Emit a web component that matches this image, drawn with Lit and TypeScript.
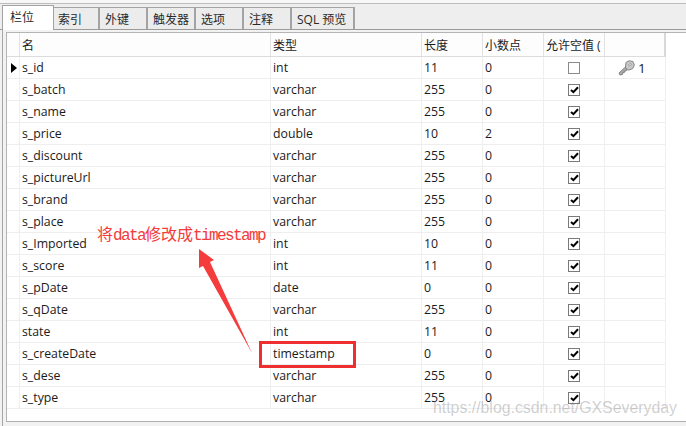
import { LitElement, html, css, svg } from "lit";
import { customElement } from "lit/decorators.js";

type Row = [string, string, string, string, boolean];
const rows: Row[] = [
  ["s_id", "int", "11", "0", false],
  ["s_batch", "varchar", "255", "0", true],
  ["s_name", "varchar", "255", "0", true],
  ["s_price", "double", "10", "2", true],
  ["s_discount", "varchar", "255", "0", true],
  ["s_pictureUrl", "varchar", "255", "0", true],
  ["s_brand", "varchar", "255", "0", true],
  ["s_place", "varchar", "255", "0", true],
  ["s_Imported", "int", "10", "0", true],
  ["s_score", "int", "11", "0", true],
  ["s_pDate", "date", "0", "0", true],
  ["s_qDate", "varchar", "255", "0", true],
  ["state", "int", "11", "0", true],
  ["s_createDate", "timestamp", "0", "0", true],
  ["s_dese", "varchar", "255", "0", true],
  ["s_type", "varchar", "255", "0", true],
];
const tabs = ["索引", "外键", "触发器", "选项", "注释", "SQL 预览"];

const key = svg`<svg class="key" width="17" height="16" viewBox="0 0 17 16">
  <path d="M1 13 L2 15 L4.5 14.5 L5 12.5 L6.5 12.3 L7.3 10.5 L9 9.7" fill="#b5b5b5" stroke="#7d7d7d" stroke-width="1" stroke-linejoin="round"/>
  <path d="M1 13 L7.5 7 L9 9.7 L4 13.5" fill="#a8a8a8" stroke="#858585" stroke-width="1" stroke-linejoin="round"/>
  <path d="M7.5 7 L8 2.5 L11 0.8 L15 1.5 L16.3 5 L14.8 8.5 L11 10 L9 9.7 Z" fill="#c9c9c9" stroke="#858585" stroke-width="1" stroke-linejoin="round"/>
  <path d="M10.5 4.5 L13 3.5 L13.5 5 L11.2 6 Z" fill="#f4f4f4" stroke="#8f8f8f" stroke-width="0.7"/>
</svg>`;

@customElement("app-root")
export class AppRoot extends LitElement {
  static styles = css`
    :host { display: block; width: 686px; height: 426px; overflow: hidden; position: relative; background: #f2f2f2;
      font-family: "Open Sans", "Noto Sans CJK SC", sans-serif; font-size: 12.3px; color: #1a1a1a; }
    .top { height: 3px; background: #f7f7f7; border-bottom: 1px solid #bdbdbd; }
    .tabbar { height: 25px; background: #eeeeee; border-bottom: 1px solid #9b9b9b; display: flex; align-items: flex-end; padding-left: 2px; }
    .tab { box-sizing: border-box; height: 22px; background: #ececec; border-top: 1px solid #a3a3a3; border-right: 2px solid #a3a3a3; width: 48px;
      display: flex; align-items: center; padding-left: 5px; font-size: 12px; color: #2a2a2a; }
    .tab.first { width: 46px; padding-left: 4px; }
    .tab.sql { width: 63px; }
    .tab.active { width: 52px; height: 25px; background: #fff; border: 1px solid #a3a3a3; border-bottom: 0; margin-bottom: -1px; padding-left: 7px; padding-bottom: 3px; position: relative; }
    .panel { height: 396px; box-sizing: border-box; margin-left: 2px; border-left: 1px solid #a6a6a6; padding: 2px 0 0 3px; background: #f2f2f2; }
    .inner { height: 390px; box-sizing: border-box; background: #fff; border-left: 1px solid #b4b4b4; border-top: 1px solid #b4b4b4; border-bottom: 1px solid #b0b0b0; }
    .grid { width: 659px; }
    .r { display: grid; grid-template-columns: 13px 251px 151px 61px 61px 61px 61px; height: 22px; box-sizing: border-box; border-bottom: 1px solid #eeeeee; }
    .r.head { height: 24px; background: #fdfdfd; border-bottom: 1px solid #dcdcdc; font-size: 12px; }
    .c { box-sizing: border-box; border-right: 1px solid #efefef; padding-left: 2px; display: flex; align-items: center; white-space: nowrap; overflow: hidden; }
    .head .c { border-right-color: #e2e2e2; }
    .c.mark { padding-left: 4px; }
    .c.check { justify-content: center; padding-left: 0; }
    .c.keycell { padding-left: 13px; gap: 3px; font-size: 13.5px; }
    .head .c.last { border-right: 2px solid #d8d8d8; }
    .c.last { border-right: 1px solid #efefef; }
    .tri { width: 0; height: 0; border-left: 6px solid #000; border-top: 5.5px solid transparent; border-bottom: 5.5px solid transparent; }
    .box { width: 12px; height: 12px; box-sizing: border-box; border: 1px solid #8a8a8a; background: #fff; display: flex; align-items: center; justify-content: center; }
    .box.on { border: 1.5px solid #7a7a7a; }
    .note { position: absolute; left: 97px; top: 223px; color: #f33b3b; white-space: nowrap; line-height: 20px; font-family: "Liberation Mono", monospace; font-size: 16px; letter-spacing: -1.6px; }
    .note b { font-family: "Noto Sans CJK SC", sans-serif; font-weight: 400; font-size: 16px; letter-spacing: 0; }
    .frame { position: absolute; left: 259px; top: 341px; width: 97px; height: 27px; box-sizing: border-box; border: 3px solid #ee2f2f; }
    .arrow { position: absolute; left: 190px; top: 240px; }
    .wm { position: absolute; left: 433px; top: 398px; font-family: "Liberation Sans", sans-serif; font-size: 15.85px; color: rgba(120,120,120,0.36); line-height: 20px; white-space: nowrap; }
  `;

  render() {
    return html`
      <div class="top"></div>
      <div class="tabbar">
        <div class="tab active">栏位</div>
        ${tabs.map((t, i) => html`<div class="tab ${i === 0 ? "first" : ""} ${i === 5 ? "sql" : ""}">${t}</div>`)}
      </div>
      <div class="panel">
        <div class="inner">
          <div class="grid">
            <div class="r head">
              <div class="c mark"></div><div class="c">名</div><div class="c">类型</div><div class="c">长度</div><div class="c">小数点</div><div class="c">允许空值 (</div><div class="c last"></div>
            </div>
            ${rows.map((r, i) => html`
              <div class="r">
                <div class="c mark">${i === 0 ? html`<span class="tri"></span>` : ""}</div>
                <div class="c">${r[0]}</div>
                <div class="c">${r[1]}</div>
                <div class="c">${r[2]}</div>
                <div class="c">${r[3]}</div>
                <div class="c check"><span class="box ${r[4] ? "on" : ""}">${r[4] ? html`<svg width="9" height="8" viewBox="0 0 9 8"><path d="M1 4 L3.4 6.2 L8 1.2" fill="none" stroke="#000" stroke-width="2"/></svg>` : ""}</span></div>
                <div class="c last ${i === 0 ? "keycell" : ""}">${i === 0 ? html`${key}<span>1</span>` : ""}</div>
              </div>`)}
          </div>
        </div>
      </div>
      <svg class="arrow" width="70" height="120" viewBox="190 240 70 120">
        <path d="M199 249 L214 260 L210 262 L252 353 L203 266 L199 268 Z" fill="#f43c3c"/>
      </svg>
      <div class="frame"></div>
      <div class="note"><b>将</b>data<b>修改成</b>timestamp</div>
      <div class="wm">https://blog.csdn.net/GXSeveryday</div>
    `;
  }
}
